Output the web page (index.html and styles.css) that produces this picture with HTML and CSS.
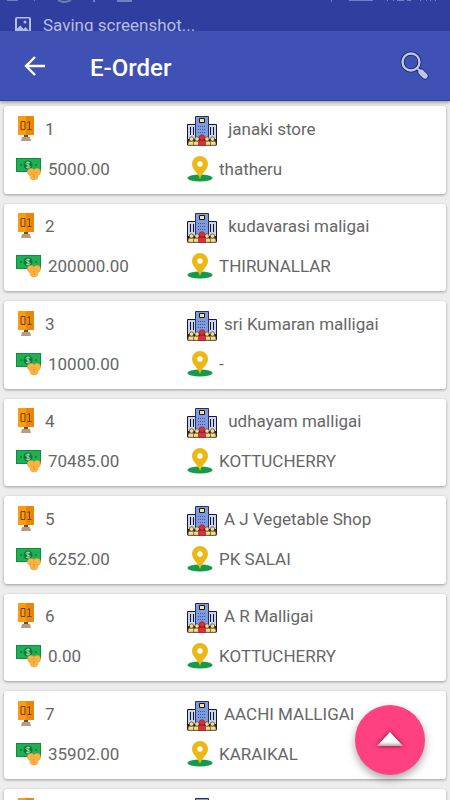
FILE: index.html
```
<!DOCTYPE html>
<html lang="en">
<head>
  <meta charset="UTF-8">
  <meta name="viewport" content="width=device-width, initial-scale=1.0">
  <title>E-Order</title>
  <link rel="stylesheet" href="styles.css">
</head>
<body>
  <svg class="sprite" aria-hidden="true">
    <symbol id="icon-number" viewBox="0 0 18 26">
      <path d="M7 18h4v4H7z" fill="#65513f"/>
      <path d="M5 21h8l1 4H4z" fill="#b99a80"/>
      <path d="M1 0h8v19H1z" fill="#fb9b0d"/>
      <path d="M9 0h8v19H9z" fill="#ec8608"/>
      <path d="M4 5.500h4v8H4zM10.500 6.500l2-1v8M10.500 13.500h4" fill="none" stroke="#6b4312" stroke-width="1"/>
    </symbol>
    <symbol id="icon-money" viewBox="0 0 26 24">
      <path d="M0 1h25v14H0z" fill="#0a8f3b"/>
      <path d="M1 2h23v12H1z" fill="#22ae52"/>
      <circle cx="12" cy="8" r="4.500" fill="#0b7c3b"/>
      <path d="M14 6c-1-1-4-1-4 .5S14 8 14 9.500 11 11 10 10M12 4.500v7" fill="none" stroke="#b9e9b8" stroke-width=".9"/>
      <circle cx="5" cy="8" r="1" fill="#0b7c3b"/>
      <circle cx="20" cy="8" r="1" fill="#0b7c3b"/>
      <g fill="#fbb545" stroke="#f0a43c" stroke-width=".7">
        <circle cx="15" cy="15" r="3.500"/>
        <circle cx="21" cy="15" r="3.500"/>
        <circle cx="18" cy="19" r="4"/>
      </g>
      <path d="M17 18l1-1v4" fill="none" stroke="#e98d29"/>
    </symbol>
    <symbol id="icon-store" viewBox="0 0 30 30">
      <path d="M.5 8.500h9v20h-9zM20.500 8.500h9v20h-9z" fill="#c9d3f1" stroke="#15172b"/>
      <path d="M8.500.5h13v28h-13z" fill="#7f9be0" stroke="#2a3153"/>
      <path d="M12.500 2.500h5v4h-5z" fill="#ffe27a" stroke="#15172b"/>
      <path d="M11 10.500h8M11 13.500h8M11 16.500h8" stroke="#3f5596" stroke-dasharray="1 1"/>
      <path d="M3.500 11v8M6.500 11v8M23.500 11v8M26.500 11v8" stroke="#15172b"/>
      <path d="M.5 29.500V23h29v6.500z" fill="#2b2730"/>
      <g fill="#fbdc7c" stroke="#2b2730" stroke-width=".6">
        <path d="M1 29.300V27q0-2 2-2h3q2 0 2 2v2.300zM22 29.300V27q0-2 2-2h3q2 0 2 2v2.300z"/>
        <path d="M6.500 29.300V27q0-2 2-2h3q2 0 2 2v2.300zM16.500 29.300V27q0-2 2-2h3q2 0 2 2v2.300z"/>
        <circle cx="4.500" cy="23" r="2.200"/>
        <circle cx="10" cy="23" r="2.200"/>
        <circle cx="20" cy="23" r="2.200"/>
        <circle cx="25.500" cy="23" r="2.200"/>
      </g>
      <path d="M11.500 29.500V26q0-2 2-2h3q2 0 2 2v3.500z" fill="#e52a3c" stroke="#6e1421" stroke-width=".5"/>
      <circle cx="15" cy="21.500" r="2.800" fill="#e52a3c" stroke="#6e1421" stroke-width=".5"/>
    </symbol>
    <symbol id="icon-pin" viewBox="0 0 26 26">
      <ellipse cx="13" cy="22" rx="12.500" ry="3.500" fill="#159b48"/>
      <path d="M13 23C11.500 17 5 14 5 8a8 8 0 0 1 16 0c0 6-6.500 9-8 15z" fill="#eab916"/>
      <circle cx="13" cy="8" r="2.700" fill="#fff"/>
    </symbol>
  </svg>

  <div class="app">
    <div class="status-bar">
      <div class="status-icons">
        <svg width="140" height="3" viewBox="0 0 140 3" aria-hidden="true">
          <path d="M7 0h11v1H7zM34 0h1v1h-1zM93 0h2v2h-2zM117 0h15v2h-15z" fill="#7380c4"/>
          <path d="M58 0q6 4 13 0" fill="none" stroke="#7180a5" stroke-width="2"/>
        </svg>
        <svg width="120" height="3" viewBox="0 0 120 3" aria-hidden="true">
          <path d="M1 0h1v2h-1zM19 0h24v1H19zM57 0h1v1h-1zM63 0h1v1h-1zM67 0h7v1h-7zM77 0h4v1h-4zM90 0h1v1h-1zM96 0h1v1h-1zM100 0h1v1h-1zM105 0h1v1h-1z" fill="#7380c4"/>
        </svg>
      </div>
      <div class="ticker">
        <svg width="18" height="18" viewBox="0 0 18 18" aria-hidden="true">
          <path fill="#b4bde3" fill-rule="evenodd" d="M3 1h12q2 0 2 2v12q0 2-2 2H3q-2 0-2-2V3q0-2 2-2zm0 1.500v10l3.500-3 3 3.500 2-2 3.500 4V2.500z"/>
          <circle cx="11" cy="6" r="1.500" fill="#b4bde3"/>
        </svg>
        <span>Saving screenshot...</span>
      </div>
    </div>

    <header class="toolbar">
      <button class="icon-button" aria-label="Back">
        <svg width="22" height="22" viewBox="0 0 22 22"><path d="M11 2L2 11l9 9M2 11h19" fill="none" stroke="#fff" stroke-width="2.400"/></svg>
      </button>
      <h1>E-Order</h1>
      <button class="icon-button" aria-label="Search">
        <svg width="30" height="30" viewBox="0 0 30 30">
          <circle cx="11" cy="11" r="8.500" fill="none" stroke="#1e2861" stroke-width="4"/>
          <path d="M17 17l3 3" stroke="#1e2861" stroke-width="4"/>
          <path d="M21 21l4 4" stroke="#1e2861" stroke-width="7" stroke-linecap="round"/>
          <circle cx="11" cy="11" r="8.500" fill="none" stroke="#bac6ee" stroke-width="2.400"/>
          <path d="M17 17l3 3" stroke="#bac6ee" stroke-width="2"/>
          <path d="M21 21l4 4" stroke="#bac6ee" stroke-width="5.400" stroke-linecap="round"/>
        </svg>
      </button>
    </header>

    <main class="order-list">
      <article class="card">
        <div class="cell"><svg class="icon-number"><use href="#icon-number"/></svg><span>1</span></div>
        <div class="cell"><svg class="icon-store"><use href="#icon-store"/></svg><span> janaki store</span></div>
        <div class="cell"><svg class="icon-money"><use href="#icon-money"/></svg><span>5000.00</span></div>
        <div class="cell"><svg class="icon-pin"><use href="#icon-pin"/></svg><span>thatheru</span></div>
      </article>
      <article class="card">
        <div class="cell"><svg class="icon-number"><use href="#icon-number"/></svg><span>2</span></div>
        <div class="cell"><svg class="icon-store"><use href="#icon-store"/></svg><span> kudavarasi maligai</span></div>
        <div class="cell"><svg class="icon-money"><use href="#icon-money"/></svg><span>200000.00</span></div>
        <div class="cell"><svg class="icon-pin"><use href="#icon-pin"/></svg><span>THIRUNALLAR</span></div>
      </article>
      <article class="card">
        <div class="cell"><svg class="icon-number"><use href="#icon-number"/></svg><span>3</span></div>
        <div class="cell"><svg class="icon-store"><use href="#icon-store"/></svg><span>sri Kumaran malligai</span></div>
        <div class="cell"><svg class="icon-money"><use href="#icon-money"/></svg><span>10000.00</span></div>
        <div class="cell"><svg class="icon-pin"><use href="#icon-pin"/></svg><span>-</span></div>
      </article>
      <article class="card">
        <div class="cell"><svg class="icon-number"><use href="#icon-number"/></svg><span>4</span></div>
        <div class="cell"><svg class="icon-store"><use href="#icon-store"/></svg><span> udhayam malligai</span></div>
        <div class="cell"><svg class="icon-money"><use href="#icon-money"/></svg><span>70485.00</span></div>
        <div class="cell"><svg class="icon-pin"><use href="#icon-pin"/></svg><span>KOTTUCHERRY</span></div>
      </article>
      <article class="card">
        <div class="cell"><svg class="icon-number"><use href="#icon-number"/></svg><span>5</span></div>
        <div class="cell"><svg class="icon-store"><use href="#icon-store"/></svg><span>A J Vegetable Shop</span></div>
        <div class="cell"><svg class="icon-money"><use href="#icon-money"/></svg><span>6252.00</span></div>
        <div class="cell"><svg class="icon-pin"><use href="#icon-pin"/></svg><span>PK SALAI</span></div>
      </article>
      <article class="card">
        <div class="cell"><svg class="icon-number"><use href="#icon-number"/></svg><span>6</span></div>
        <div class="cell"><svg class="icon-store"><use href="#icon-store"/></svg><span>A R Malligai</span></div>
        <div class="cell"><svg class="icon-money"><use href="#icon-money"/></svg><span>0.00</span></div>
        <div class="cell"><svg class="icon-pin"><use href="#icon-pin"/></svg><span>KOTTUCHERRY</span></div>
      </article>
      <article class="card">
        <div class="cell"><svg class="icon-number"><use href="#icon-number"/></svg><span>7</span></div>
        <div class="cell"><svg class="icon-store"><use href="#icon-store"/></svg><span>AACHI MALLIGAI</span></div>
        <div class="cell"><svg class="icon-money"><use href="#icon-money"/></svg><span>35902.00</span></div>
        <div class="cell"><svg class="icon-pin"><use href="#icon-pin"/></svg><span>KARAIKAL</span></div>
      </article>
      <article class="card">
        <div class="cell"><svg class="icon-number"><use href="#icon-number"/></svg></div>
        <div class="cell"><svg class="icon-store"><use href="#icon-store"/></svg></div>
      </article>
    </main>
  </div>

  <button class="fab" aria-label="Back to top">
    <svg width="34" height="26" viewBox="0 0 34 26">
      <defs>
        <linearGradient id="arrow-fill" x1="0" y1="0" x2="0" y2="1">
          <stop offset=".7" stop-color="#fff"/>
          <stop offset="1" stop-color="#b9a7ad"/>
        </linearGradient>
      </defs>
      <path d="M17 5l13 14H4z" fill="url(#arrow-fill)"/>
    </svg>
  </button>
</body>
</html>
```
FILE: styles.css
```
* {
  margin: 0;
  padding: 0;
  box-sizing: border-box;
}

body {
  background: #ededed;
  color: #666;
  font-family: Roboto, "Liberation Sans", sans-serif;
  font-size: 17px;
}

button {
  border: 0;
  background: none;
  cursor: pointer;
}

.sprite {
  position: absolute;
  width: 0;
  height: 0;
}

.app {
  display: flex;
  flex-direction: column;
  height: 100vh;
  overflow: hidden;
}

/* status bar */
.status-bar {
  flex: none;
  height: 31px;
  overflow: hidden;
  background: #303f9f;
  color: #b4bde3;
}

.status-icons {
  display: flex;
  justify-content: space-between;
  height: 3px;
}

.ticker {
  display: flex;
  align-items: center;
  gap: 11px;
  padding: 10px 14px 0;
  line-height: 24px;
}

/* toolbar */
.toolbar {
  flex: none;
  display: flex;
  align-items: center;
  height: 70px;
  padding: 0 20px;
  background: #3f51b5;
  border-bottom: 1px solid #303f9f;
  box-shadow: 0 2px 3px rgba(0, 0, 0, 0.3);
  z-index: 1;
}

.toolbar h1 {
  flex: 1;
  padding-top: 4px;
  margin-left: 40px;
  color: #fff;
  font-size: 24px;
  font-weight: 500;
  line-height: 32px;
}

.icon-button {
  display: flex;
  align-items: center;
  justify-content: center;
  width: 30px;
  height: 48px;
}

/* orders */
.order-list {
  flex: 1;
  min-height: 0;
  display: flex;
  flex-direction: column;
  gap: 10px;
  padding: 5px 4px;
  overflow: hidden;
}

.card {
  flex: none;
  display: grid;
  grid-template-columns: 171px 1fr;
  grid-auto-rows: 40px;
  height: 88px;
  padding: 3px 12px;
  background: #fff;
  border-radius: 3px;
  box-shadow: 0 1px 3px rgba(0, 0, 0, 0.35);
}

.card:nth-child(even) {
  height: 87px;
  padding-top: 2px;
}

.cell {
  display: flex;
  align-items: center;
  white-space: pre;
  line-height: 24px;
}

.cell svg {
  flex: none;
}

.icon-number {
  width: 18px;
  height: 26px;
  margin: 0 10px 0 1px;
}

.icon-money {
  width: 26px;
  height: 24px;
  margin-right: 6px;
}

.icon-store {
  width: 30px;
  height: 30px;
  margin: 4px 7px 0 0;
}

.icon-pin {
  width: 26px;
  height: 26px;
  margin-right: 6px;
}

.fab {
  position: fixed;
  right: 25px;
  bottom: 25px;
  z-index: 2;
  display: flex;
  align-items: center;
  justify-content: center;
  width: 70px;
  height: 70px;
  border-radius: 50%;
  background: #ff4081;
  box-shadow: 0 4px 9px rgba(0, 0, 0, 0.35);
}

.fab svg {
  filter: drop-shadow(0 0 2px rgba(70, 0, 30, 0.8));
}
```
